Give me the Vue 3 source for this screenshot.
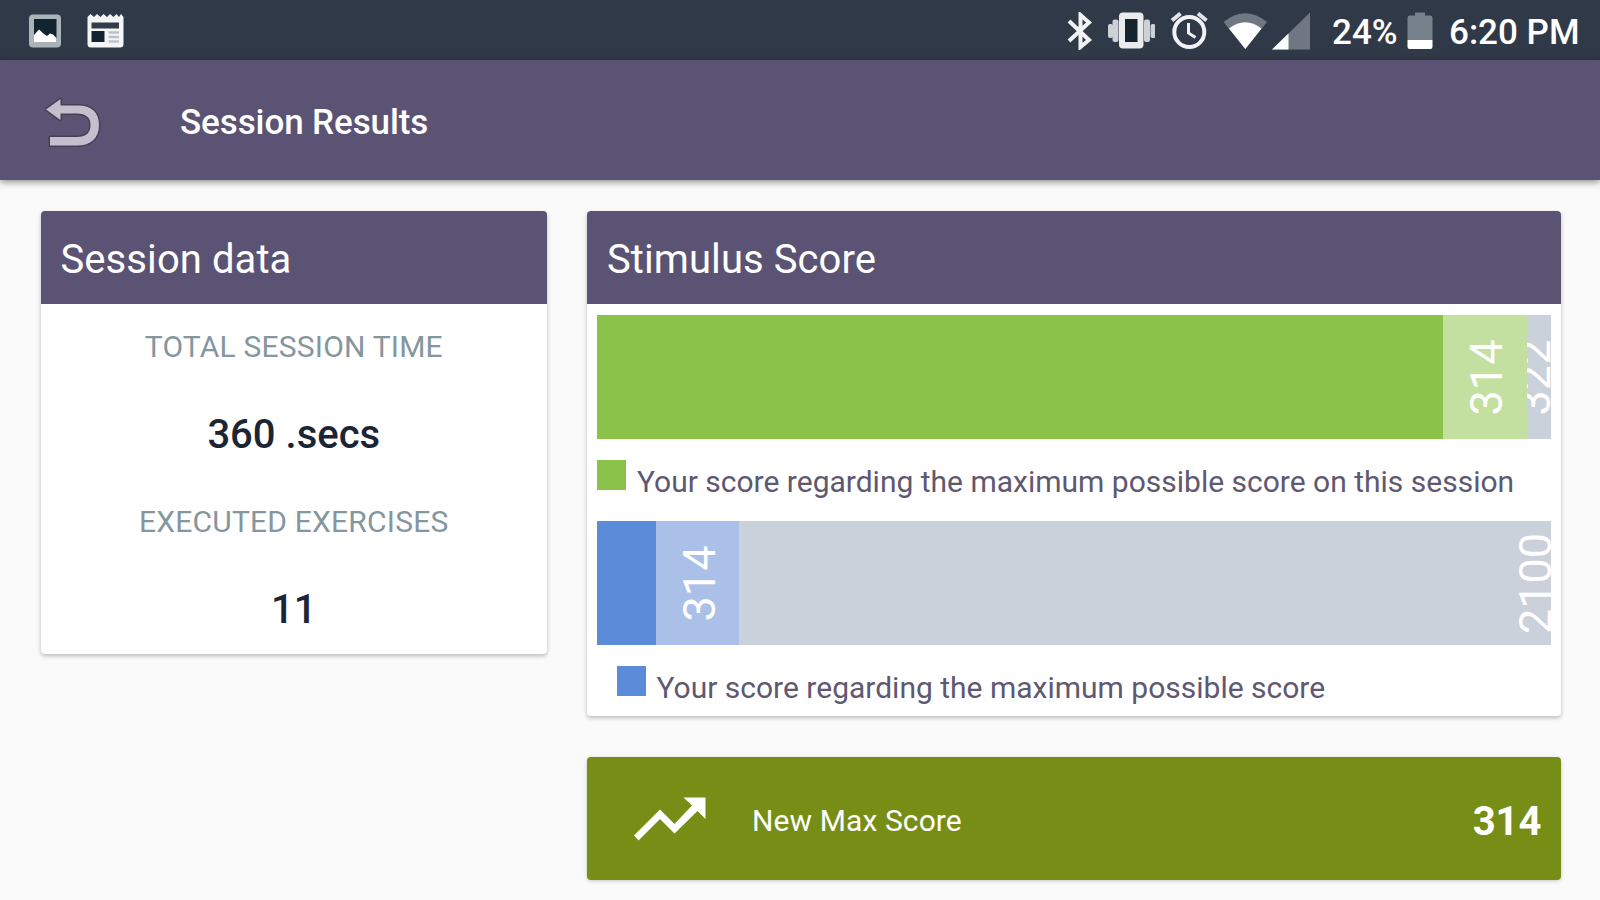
<script setup>
const sessionData = [
  { label: 'TOTAL SESSION TIME', value: '360 .secs' },
  { label: 'EXECUTED EXERCISES', value: '11' },
]

const charts = [
  {
    tone: 'green',
    solid: 846,
    light: 83.5,
    score: '314',
    max: '322',
    legend: 'Your score regarding the maximum possible score on this session',
  },
  {
    tone: 'blue',
    solid: 59.3,
    light: 83.2,
    score: '314',
    max: '2100',
    legend: 'Your score regarding the maximum possible score',
  },
]
</script>

<template>
  <div class="screen">
    <div class="status-bar">
      <div class="notifications">
        <svg width="34" height="36" viewBox="28 13 34 36">
          <rect x="29" y="14.5" width="32" height="33" rx="4" fill="#a9b3b8" />
          <rect x="34" y="19" width="22.5" height="23" fill="#132430" />
          <path d="M34 35 L39 29.5 L44 34 L47 36 L50 33.5 L53 34.5 L56.5 38 V42 H34 Z" fill="#fff" />
        </svg>
        <svg width="38" height="36" viewBox="86 13 38 36">
          <path
            d="M87.500 17 L90.500 14 L94 17 L97 14 L100.500 17 L103.500 14 L107 17 L110 14 L113.500 17 L116.500 14 L119 17 L121 14 L123.500 17 V44 a3.500 3.500 0 0 1 -3.500 3.500 H91 a3.500 3.500 0 0 1 -3.500 -3.500 Z"
            fill="#f4f5f7"
          />
          <rect x="91.500" y="22.500" width="27.500" height="6" fill="#333d49" />
          <rect x="91.500" y="31" width="13" height="11" fill="#132430" />
          <path d="M108.500 32.500 H119 M108.500 37 H119 M108.500 41.500 H119" stroke="#bcc2c7" stroke-width="2.500" />
        </svg>
      </div>
      <div class="indicators">
        <svg class="bluetooth" width="26" height="38" viewBox="1067 12 26 38">
          <path
            d="M1069 21 L1089 40 L1080.500 47 V15 L1089 22.500 L1069 41"
            fill="none"
            stroke="#f1f2f4"
            stroke-width="4"
          />
        </svg>
        <svg class="vibrate" width="48" height="38" viewBox="1107 12 48 38">
          <rect x="1108" y="24" width="5" height="14" rx="2" fill="#cdd1d6" />
          <rect x="1112.500" y="19.500" width="6" height="22.500" rx="2" fill="#cdd1d6" />
          <rect x="1144" y="19.500" width="6" height="22.500" rx="2" fill="#cdd1d6" />
          <rect x="1150.500" y="24" width="5" height="14" rx="2" fill="#cdd1d6" />
          <rect x="1119" y="12.500" width="24.500" height="36" rx="4" fill="#e9ebed" />
          <rect x="1125" y="19" width="12.500" height="23" fill="#16242f" />
        </svg>
        <svg class="alarm" width="38" height="38" viewBox="1170 12 38 38">
          <circle cx="1189.300" cy="32" r="15" fill="none" stroke="#f1f2f4" stroke-width="4" />
          <path d="M1188.500 23 V33 L1195.500 37.500" fill="none" stroke="#f1f2f4" stroke-width="3" />
          <path d="M1172 20.500 L1180.500 13.500 M1198 13.500 L1206.500 20.500" stroke="#e2e5e8" stroke-width="4" />
        </svg>
        <svg class="wifi" width="44" height="38" viewBox="1223 12 44 38">
          <path d="M1245.300 49 L1223.500 22 Q1245.300 4.500 1267 22 Z" fill="#6f7882" />
          <path d="M1245.300 49 L1229 28.500 Q1245.300 16 1261.500 28.500 Z" fill="#fff" />
        </svg>
        <svg class="signal" width="39" height="38" viewBox="1272 12 39 38">
          <path d="M1272 49.500 L1310 12.500 V49.500 Z" fill="#6f7882" />
          <path d="M1272 49.500 L1288.500 33.500 V49.500 Z" fill="#fff" />
        </svg>
        <span class="percent">24%</span>
        <svg class="battery" width="26" height="38" viewBox="1407 12 26 38">
          <path
            d="M1409.500 15.500 H1415 V12.500 H1425 V15.500 H1430 a2.500 2.500 0 0 1 2.500 2.500 V40 H1407.500 V18 a2.500 2.500 0 0 1 2 -2.500 Z"
            fill="#75808a"
          />
          <path d="M1407.500 40 H1432.500 V47 a2 2 0 0 1 -2 2 H1409.500 a2 2 0 0 1 -2 -2 Z" fill="#fff" />
        </svg>
        <span class="clock">6:20 PM</span>
      </div>
    </div>

    <header class="app-bar">
      <svg class="back" width="60" height="54" viewBox="43 95 60 54">
        <path
          class="back-edge"
          d="M46 108.500 L60.500 98 V104.500 H78 C92 104.500 99 112 99 124 C99 137 91 144.500 77 144.500 H50 V136 H77 C86 136 90.500 132 90.500 124 C90.500 116.500 86 112.500 77 112.500 H60.500 V119 Z"
        />
        <path
          d="M46 108.500 L60.500 98 V104.500 H78 C92 104.500 99 112 99 124 C99 137 91 144.500 77 144.500 H50 V136 H77 C86 136 90.500 132 90.500 124 C90.500 116.500 86 112.500 77 112.500 H60.500 V119 Z"
          fill="#c4bfcf"
        />
      </svg>
      <h1 class="title">Session Results</h1>
    </header>

    <main class="content">
      <section class="card session">
        <h2 class="card-title">Session data</h2>
        <template v-for="row in sessionData" :key="row.label">
          <div class="label">{{ row.label }}</div>
          <div class="value">{{ row.value }}</div>
        </template>
      </section>

      <div class="column">
        <section class="card stimulus">
          <h2 class="card-title">Stimulus Score</h2>
          <div v-for="chart in charts" :key="chart.tone" class="chart" :class="chart.tone">
            <div class="bar">
              <div class="solid" :style="{ width: chart.solid + 'px' }"></div>
              <div class="light" :style="{ width: chart.light + 'px' }">
                <span class="amount">{{ chart.score }}</span>
              </div>
              <div class="rest">
                <span class="amount">{{ chart.max }}</span>
              </div>
            </div>
            <div class="legend">
              <span class="swatch"></span>
              <span class="legend-text">{{ chart.legend }}</span>
            </div>
          </div>
        </section>

        <section class="max-score">
          <svg class="trend" width="74" height="46" viewBox="633 796 74 46">
            <path
              d="M683.500 797.500 H705.500 V819 L697.500 811 L674.500 833.500 L660 819 L638.500 840.500 L634 835.500 L660 809.500 L674.500 824 L692 805.500 Z"
              fill="#fff"
            />
          </svg>
          <span class="max-label">New Max Score</span>
          <span class="max-value">314</span>
        </section>
      </div>
    </main>
  </div>
</template>

<style>
body {
  margin: 0;
  background: #fafafa;
}
</style>

<style scoped>
.screen {
  width: 1600px;
  height: 900px;
  overflow: hidden;
  display: flex;
  flex-direction: column;
  background: #fafafa;
  font-family: Roboto, "Liberation Sans", sans-serif;
}

svg {
  display: block;
  flex: none;
}

.status-bar {
  flex: none;
  height: 60px;
  box-sizing: border-box;
  padding: 0 20px 0 28px;
  display: flex;
  justify-content: space-between;
  background: #303947;
  color: #fff;
}

.notifications {
  display: flex;
  gap: 24px;
  padding-top: 13px;
}

.indicators {
  display: flex;
  align-items: flex-start;
  padding-top: 12px;
  font-size: 35px;
  font-weight: 500;
  line-height: 41px;
  white-space: nowrap;
}

.vibrate {
  margin-left: 14px;
}

.alarm {
  margin-left: 15px;
}

.wifi {
  margin-left: 15px;
}

.signal {
  margin-left: 5px;
}

.percent {
  width: 75px;
  padding-left: 21px;
}

.clock {
  width: 131px;
  padding-left: 16px;
}

.app-bar {
  flex: none;
  height: 120px;
  box-sizing: border-box;
  padding-left: 43px;
  display: flex;
  align-items: center;
  gap: 77px;
  background: #5b5374;
  box-shadow: 0 2px 7px rgba(0, 0, 0, 0.45);
}

.back {
  margin-top: 6px;
}

.back-edge {
  fill: #474055;
  stroke: #474055;
  stroke-width: 3px;
  stroke-linejoin: round;
}

.title {
  margin: 0;
  padding-top: 6px;
  font-size: 35px;
  line-height: 42px;
  font-weight: 500;
  letter-spacing: -0.1px;
  color: #fff;
}

.content {
  display: flex;
  align-items: flex-start;
  gap: 40px;
  padding: 30.500px 39.500px 0 40.500px;
}

.card {
  border-radius: 4px;
  background: #fff;
  box-shadow: 0 2px 4px rgba(0, 0, 0, 0.26);
  overflow: hidden;
}

.session {
  flex: none;
  width: 506.500px;
  height: 443.500px;
}

.card-title {
  margin: 0;
  padding-left: 20px;
  height: 93px;
  font-size: 40px;
  line-height: 97px;
  font-weight: 400;
  letter-spacing: 0.08px;
  background: #5b5374;
  color: #fff;
}

.label,
.value {
  height: 87.500px;
  line-height: 87px;
  text-align: center;
}

.label {
  font-size: 30px;
  line-height: 85px;
  letter-spacing: 0.2px;
  color: #84969e;
}

.value {
  font-size: 40px;
  font-weight: 500;
  color: #1c2535;
}

.column {
  flex: 1;
  min-width: 0;
  display: flex;
  flex-direction: column;
  gap: 41px;
}

.stimulus {
  height: 505.500px;
}

.chart {
  padding: 11.500px 10px 0;
  height: 194.500px;
}

.bar {
  height: 123.500px;
  display: flex;
  overflow: hidden;
}

.solid,
.light {
  flex: none;
}

.light,
.rest {
  display: flex;
  align-items: center;
  justify-content: center;
  overflow: hidden;
}

.rest {
  flex: 1;
  min-width: 0;
  background: #cad1da;
}

.blue .rest {
  justify-content: flex-end;
}

.green .solid,
.green .swatch {
  background: #8bc34a;
}

.green .light {
  background: #c3e0a0;
}

.blue .solid,
.blue .swatch {
  background: #5c8bd9;
}

.blue .light {
  background: #abc0e8;
}

/* The rotated digits sit slightly below and right of the segment centre */
.amount {
  flex: none;
  transform: translate(2px, 1px) rotate(-90deg);
  font-size: 45px;
  line-height: 53px;
  color: #fff;
}

.green .rest .amount {
  margin-right: 11px;
}

.blue .rest .amount {
  margin-right: -34px;
}

.legend {
  display: flex;
  align-items: flex-start;
  gap: 11px;
  padding-top: 21px;
}

.blue .legend {
  padding: 21px 0 0 19.500px;
}

.swatch {
  flex: none;
  width: 29px;
  height: 30px;
}

.legend-text {
  margin-top: 4px;
  font-size: 30px;
  line-height: 35px;
  color: #5f5872;
  white-space: nowrap;
}

.max-score {
  height: 122.500px;
  box-sizing: border-box;
  padding: 0 19px 0 46px;
  display: flex;
  align-items: center;
  border-radius: 4px;
  background: #768e16;
  box-shadow: 0 1px 4px rgba(0, 0, 0, 0.2);
  color: #fff;
}

.trend {
  margin-top: 2px;
}

.max-label {
  margin-left: 45px;
  padding-top: 5px;
  font-size: 30px;
  letter-spacing: 0.1px;
}

.max-value {
  margin-left: auto;
  padding-top: 6px;
  font-size: 40px;
  font-weight: 700;
}
</style>
